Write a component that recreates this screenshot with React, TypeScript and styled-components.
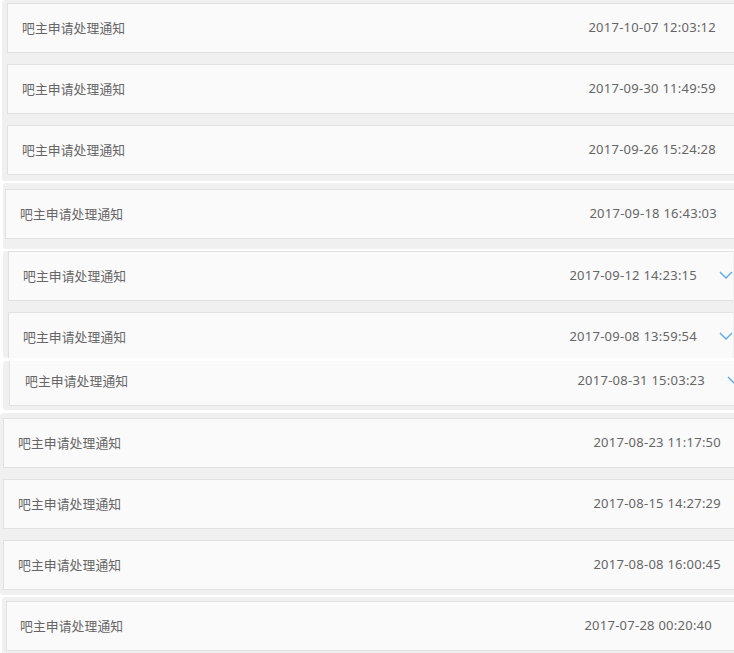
import React from 'react'
import styled, { createGlobalStyle } from 'styled-components'

const GlobalStyle = createGlobalStyle`
  html, body {
    margin: 0;
    padding: 0;
    background: #ffffff;
    overflow: hidden;
  }
  body {
    width: 734px;
    height: 653px;
    font-family: "Noto Sans", "Noto Sans CJK SC", sans-serif;
  }
`

type Row = {
  title: string
  time: string
}

type Group = {
  left: number      // where the grey strip starts
  inset: number     // strip -> card left border
  textPad: number   // card border -> title
  timeRight: number // x where the time ends
  padTop: number
  padBottom: number
  clipTop?: number  // part of the first card cut off
  height?: number   // fixed strip height (cut off)
  gapAfter: number
  chevron?: boolean
  rows: Row[]
}

const TITLE = '吧主申请处理通知'

const groups: Group[] = [
  {
    left: 2, inset: 5, textPad: 14, timeRight: 716, padTop: 3, padBottom: 6, gapAfter: 2,
    rows: [
      { title: TITLE, time: '2017-10-07 12:03:12' },
      { title: TITLE, time: '2017-09-30 11:49:59' },
      { title: TITLE, time: '2017-09-26 15:24:28' },
    ],
  },
  {
    left: 3, inset: 2, textPad: 14, timeRight: 717, padTop: 6, padBottom: 10, gapAfter: 2,
    rows: [{ title: TITLE, time: '2017-09-18 16:43:03' }],
  },
  {
    left: 3, inset: 5, textPad: 14, timeRight: 697, padTop: 0, padBottom: 0, height: 107, gapAfter: 3,
    chevron: true,
    rows: [
      { title: TITLE, time: '2017-09-12 14:23:15' },
      { title: TITLE, time: '2017-09-08 13:59:54' },
    ],
  },
  {
    left: 3, inset: 6, textPad: 15, timeRight: 705, padTop: 0, padBottom: 4, clipTop: 5, gapAfter: 3,
    chevron: true,
    rows: [{ title: TITLE, time: '2017-08-31 15:03:23' }],
  },
  {
    left: 0, inset: 3, textPad: 14, timeRight: 721, padTop: 5, padBottom: 5, gapAfter: 2,
    rows: [
      { title: TITLE, time: '2017-08-23 11:17:50' },
      { title: TITLE, time: '2017-08-15 14:27:29' },
      { title: TITLE, time: '2017-08-08 16:00:45' },
    ],
  },
  {
    left: 2, inset: 4, textPad: 13, timeRight: 712, padTop: 4, padBottom: 4, gapAfter: 0,
    rows: [{ title: TITLE, time: '2017-07-28 00:20:40' }],
  },
]

const Page = styled.div`
  display: flex;
  flex-direction: column;
  width: 734px;
`

const Strip = styled.div<{
  $left: number
  $inset: number
  $padTop: number
  $padBottom: number
  $height?: number
  $gapAfter: number
}>`
  margin-left: ${(p) => p.$left}px;
  margin-bottom: ${(p) => p.$gapAfter}px;
  padding: ${(p) => p.$padTop}px 0 ${(p) => p.$padBottom}px ${(p) => p.$inset}px;
  background: #f0f0f0;
  border-radius: 3px 0 0 3px;
  overflow: hidden;
  ${(p) => (p.$height ? `height: ${p.$height}px; box-sizing: border-box;` : '')}
`

const Stack = styled.div<{ $clipTop: number }>`
  display: flex;
  flex-direction: column;
  gap: 11px;
  margin-top: ${(p) => -p.$clipTop}px;
`

const Card = styled.div<{ $textPad: number; $padRight: number }>`
  height: 50px;
  box-sizing: border-box;
  display: flex;
  align-items: center;
  justify-content: space-between;
  background: #fafafa;
  border: 1px solid #e1e1e1;
  border-right: none;
  padding: 0 ${(p) => p.$padRight}px 2px ${(p) => p.$textPad}px;
  color: #666666;
  font-size: 13px;
`

const Title = styled.span`
  font-family: "Noto Sans CJK SC", sans-serif;
  font-size: 12.8px;
  letter-spacing: 0.1px;
`

const Right = styled.div`
  display: flex;
  align-items: center;
`

const Time = styled.span`
  font-family: "Noto Sans", "Liberation Sans", sans-serif;
  font-size: 13px;
  letter-spacing: 0.25px;
`

const Chevron = styled.svg`
  margin-left: 22px;
  width: 14px;
  height: 8px;
  flex: none;
`

export default function App() {
  return (
    <>
      <GlobalStyle />
      <Page>
        {groups.map((g, gi) => {
          const cardLeft = g.left + g.inset
          const padRight = g.chevron ? 0 : 734 - g.timeRight
          const cardWidth = 734 - cardLeft
          return (
            <Strip
              key={gi}
              $left={g.left}
              $inset={g.inset}
              $padTop={g.padTop}
              $padBottom={g.padBottom}
              $height={g.height}
              $gapAfter={g.gapAfter}
            >
              <Stack $clipTop={g.clipTop ?? 0}>
                {g.rows.map((r, ri) => (
                  <Card
                    key={ri}
                    $textPad={g.textPad}
                    $padRight={padRight}
                    style={g.chevron ? { width: g.timeRight + 36 - cardLeft } : { width: cardWidth }}
                  >
                    <Title>{r.title}</Title>
                    <Right>
                      <Time>{r.time}</Time>
                      {g.chevron && (
                        <Chevron viewBox="0 0 14 8">
                          <path d="M1 1 L7 7 L13 1" fill="none" stroke="#5aa8e4" strokeWidth="1.4" />
                        </Chevron>
                      )}
                    </Right>
                  </Card>
                ))}
              </Stack>
            </Strip>
          )
        })}
      </Page>
    </>
  )
}
